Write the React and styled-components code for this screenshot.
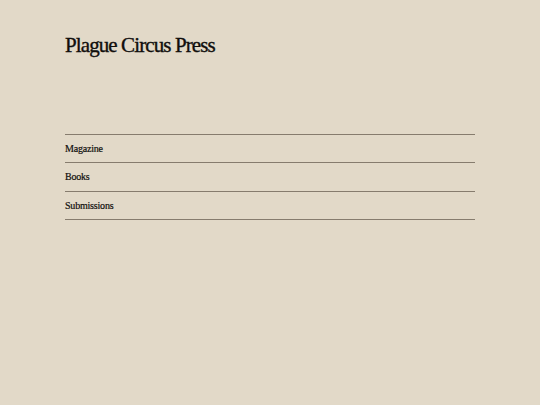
import React from "react";
import styled, { createGlobalStyle } from "styled-components";

const Global = createGlobalStyle`
  html, body { margin: 0; padding: 0; background: #e2d9c8; }
  body { font-family: "Liberation Serif", "Times New Roman", serif; color: #100e0c; }
`;

const Page = styled.div`
  padding: 30px 65px 0 65px;
  width: 410px;
`;

const Title = styled.h1`
  margin: 0;
  font-size: 21px;
  font-weight: normal;
  letter-spacing: -0.9px;
  line-height: 30px;
  height: 30px;
  -webkit-text-stroke: 0.35px #100e0c;
`;

const Nav = styled.nav`
  margin-top: 74px;
  border-top: 1px solid #867c6e;
`;

const Item = styled.a`
  display: block;
  height: 27.33px;
  line-height: 28px;
  font-size: 10px;
  letter-spacing: -0.2px;
  color: #100e0c;
  text-decoration: none;
  border-bottom: 1px solid #867c6e;
  -webkit-text-stroke: 0.2px #100e0c;
`;

export default function App() {
  return (
    <>
      <Global />
      <Page>
        <Title>Plague Circus Press</Title>
        <Nav>
          <Item href="#">Magazine</Item>
          <Item href="#">Books</Item>
          <Item href="#">Submissions</Item>
        </Nav>
      </Page>
    </>
  );
}
